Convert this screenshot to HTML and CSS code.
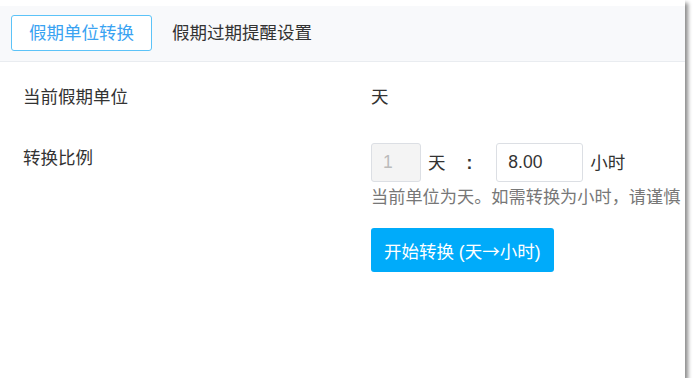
FILE: index.html
```html
<!DOCTYPE html>
<html lang="zh-CN">
<head>
    <meta charset="UTF-8">
    <meta name="viewport" content="width=device-width, initial-scale=1.0">
    <title>假期设置</title>
    <link rel="stylesheet" href="styles.css">
</head>
<body>
    <div class="panel">
        <div class="tabs">
            <div class="tab active">假期单位转换</div>
            <div class="tab">假期过期提醒设置</div>
        </div>
        <div class="content">
            <div class="row">
                <div class="label">当前假期单位</div>
                <div class="value">天</div>
            </div>
            <div class="row ratio-row">
                <div class="label">转换比例</div>
                <div class="value">
                    <div class="ratio">
                        <input type="text" class="field small" value="1" disabled>
                        <span class="unit">天</span>
                        <span class="colon">:</span>
                        <input type="text" class="field" value="8.00">
                        <span class="unit">小时</span>
                    </div>
                    <div class="hint">当前单位为天。如需转换为小时，请谨慎</div>
                    <button type="button" class="btn">开始转换 (天<span class="arrow">→</span>小时)</button>
                </div>
            </div>
        </div>
    </div>
</body>
</html>
```

FILE: styles.css
```css
body {
    margin: 0;
    background-color: #fff;
    font-family: "Liberation Sans", "Noto Sans CJK SC", sans-serif;
    font-size: 17.5px;
    color: #333;
}
.panel {
    width: 685px;
    height: 378px;
    background-color: #fff;
    box-shadow: 3px 3px 4px rgba(0, 0, 0, 0.45);
    overflow: hidden;
}
.tabs {
    display: flex;
    gap: 2px;
    margin-top: 6px;
    padding: 9px 11px 10px;
    background-color: #f8f9fb;
    border-bottom: 1px solid #e9ecf0;
}
.tab {
    padding: 0 17px;
    height: 34px;
    line-height: 34px;
    border: 1px solid transparent;
    border-radius: 3px;
    color: #333;
    white-space: nowrap;
}
.tab.active {
    border-color: #5cc3f8;
    background-color: #fff;
    color: #3aa3f2;
}
.content {
    padding: 22px 0 0 23px;
}
.row {
    display: flex;
    line-height: 26px;
}
.ratio-row {
    margin-top: 33px;
}
.label {
    width: 348px;
    flex-shrink: 0;
}
.ratio-row .label {
    padding-top: 2px;
}
.value {
    white-space: nowrap;
}
.ratio {
    display: flex;
    align-items: center;
}
.field {
    width: 87px;
    height: 39px;
    box-sizing: border-box;
    padding: 0 11px;
    border: 1px solid #dcdfe4;
    border-radius: 3px;
    font-family: inherit;
    font-size: 17.5px;
    color: #333;
    background-color: #fff;
}
.field.small {
    width: 50px;
    background-color: #f4f4f4;
    color: #bbb;
}
.unit {
    margin-left: 7px;
}
.colon {
    margin: 0 24px 0 21px;
    font-weight: bold;
}
.hint {
    margin-top: 2px;
    font-size: 17.2px;
    color: #777;
}
.btn {
    margin-top: 18px;
    height: 44px;
    padding: 0 13px;
    border: none;
    border-radius: 3px;
    background-color: #00abfa;
    color: #fff;
    font-family: inherit;
    font-size: 17.5px;
    cursor: pointer;
}
.arrow {
    font-family: "Noto Sans CJK SC", sans-serif;
}
```
